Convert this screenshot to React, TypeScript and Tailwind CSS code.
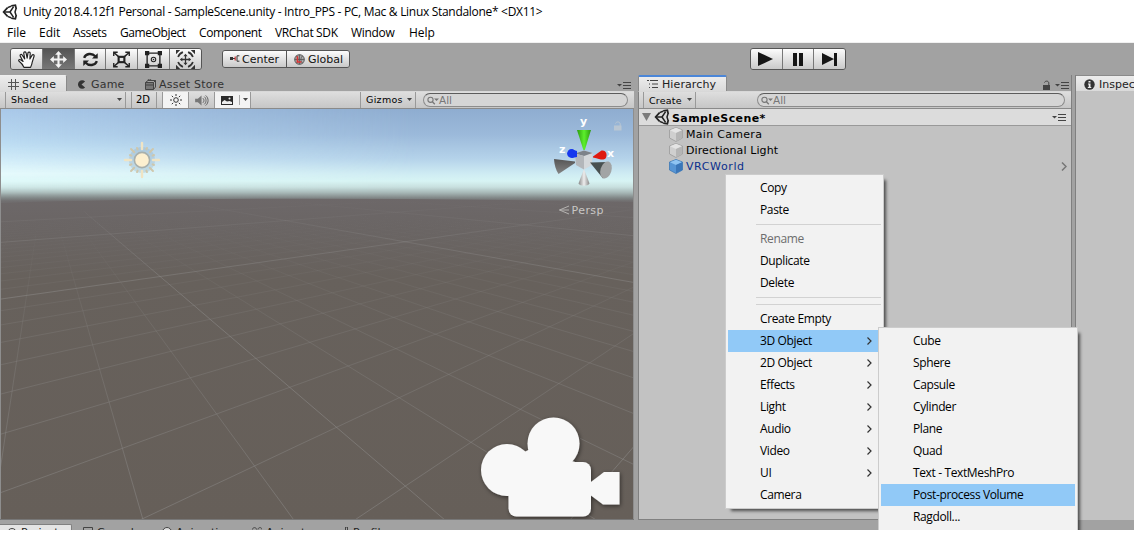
import React from 'react';

const UI_FONT = "font-['DejaVu_Sans',sans-serif]";
const WIN_FONT = "font-['Open_Sans','Noto_Sans',sans-serif]";

const UnityLogo = ({ size = 16 }) => (
    <svg width={size} height={size} viewBox="0 0 16 16" fill="none" stroke="#222" strokeWidth="1.5" className="shrink-0">
        <path d="M9.2 1.9 L13.4 1.2 L14.3 5 M14.3 11 L13.4 14.8 L9.2 14.1 M5.6 3.6 L1.6 8 L5.6 12.4" strokeWidth="1.7" />
        <path d="M9 2.2 L5.6 3.6 M9 13.8 L5.6 12.4 M14 4.8 L13 8 L14 11.2" />
        <path d="M2 8 H8 M8 8 L11.6 2.6 M8 8 L11.6 13.4" strokeWidth="1.5" />
    </svg>
);

const Caret = ({ className = '' }) => (
    <svg width="5" height="3" viewBox="0 0 5 3" className={`shrink-0 ${className}`}>
        <path d="M0 0 H5 L2.5 3 Z" fill="#444" />
    </svg>
);

const PaneMenu = () => (
    <svg width="14" height="7" viewBox="0 0 14 7" className="shrink-0">
        <path d="M0 2 H5 L2.5 4.6 Z" fill="#444" />
        <path d="M6 .5 H14 M6 3.5 H14 M6 6.5 H14" stroke="#444" />
    </svg>
);

const Lock = ({ color = '#444' }) => (
    <svg width="9" height="10" viewBox="0 0 9 10" className="shrink-0">
        <path d="M1 5 H8 V10 H1 Z" fill={color} />
        <path d="M2.5 2.5 C3 .8 6.6 .4 6.8 3 V5" fill="none" stroke={color} />
    </svg>
);

const Search = ({ className = '' }) => (
    <div className={`flex h-[14px] items-center rounded-full border border-[#8c8c8c] border-t-[#5c5c5c] bg-[#d5d5d5] pl-[3px] text-[10.5px] text-[#777] ${className}`}>
        <svg width="12" height="9" viewBox="0 0 12 9">
            <circle cx="3.5" cy="3.8" r="2.6" fill="none" stroke="#777" strokeWidth="1.1" />
            <path d="M5.4 5.7 L7.8 8.2" stroke="#777" strokeWidth="1.3" />
            <path d="M7 2.4 H12 L9.5 5 Z" fill="#777" />
        </svg>
        All
    </div>
);

/* ---------- toolbar ---------- */

const toolIcons = [
    // hand
    <path key="hand" fill="#fafafa" stroke="#222" strokeWidth="1.1" strokeLinejoin="round" strokeLinecap="round" d="M5.6 15.4 C4.6 13 2.4 10.6 .8 9.4 C.2 8.2 1.6 7.6 2.8 8.4 L4.8 9.8 L2 4.6 C1.7 3.2 3.2 2.8 3.9 3.8 L6.3 7.4 L5.4 2 C5.5 .6 7.2 .5 7.6 1.8 L8.6 6.8 L9.4 1.7 C9.9 .5 11.5 .9 11.5 2.2 L11.2 7.4 L13.3 3.9 C14.1 2.9 15.5 3.7 15.1 4.9 L13.4 10.4 C13.2 12.4 12.6 13.4 11.8 15.4 Z" />,
    // move
    <path key="move" fill="#f4f4f4" d="M8 0 L11.2 3.6 H9 V7 H12.4 V4.8 L16 8 L12.4 11.2 V9 H9 V12.4 H11.2 L8 16 L4.8 12.4 H7 V9 H3.6 V11.2 L0 8 L3.6 4.8 V7 H7 V3.6 H4.8 Z" />,
    // rotate
    <g key="rotate" fill="none" stroke="#222" strokeWidth="2.2">
        <path d="M2 6.4 C3.5 2.2 9.5 1.6 12.5 5 M14 9.6 C12.5 13.8 6.5 14.4 3.5 11" />
        <path d="M14.8 2 V7 H9.4 Z M1.2 14 V9 H6.6 Z" fill="#222" stroke="none" />
    </g>,
    // scale
    <g key="scale" fill="none" stroke="#222" strokeWidth="1.4">
        <rect x="5.3" y="5.5" width="5.4" height="5" strokeWidth="2" />
        <path d="M5 5 L1 1.6 M11 5 L15 1.6 M5 11 L1 14.4 M11 11 L15 14.4" />
        <path d="M.7 4.6 V1.2 H4.4 M11.6 1.2 H15.3 V4.6 M.7 11.4 V14.8 H4.4 M11.6 14.8 H15.3 V11.4" strokeWidth="1.3" />
    </g>,
    // rect
    <g key="rect" fill="none" stroke="#222">
        <path d="M2 2 H14 V14 H2 Z" strokeWidth="1.3" />
        <circle cx="8" cy="8" r="2.1" /><circle cx="8" cy="8" r=".7" fill="#222" stroke="none" />
        <path d="M0 0 H4 V4 H0 Z M12 0 H16 V4 H12 Z M0 12 H4 V16 H0 Z M12 12 H16 V16 H12 Z" fill="#222" stroke="none" />
    </g>,
    // transform
    <g key="transform" fill="none" stroke="#333">
        <path d="M8 2.6 L10 5 H8.6 V7.4 H11 V6 L13.4 8 L11 10 V8.6 H8.6 V11 H10 L8 13.4 L6 11 H7.4 V8.6 H5 V10 L2.6 8 L5 6 V7.4 H7.4 V5 H6 Z" fill="#333" stroke="none" />
        <path d="M1 5.6 A7.4 7.4 0 0 1 5.6 1 M10.4 1 A7.4 7.4 0 0 1 15 5.6 M15 10.4 A7.4 7.4 0 0 1 10.4 15 M5.6 15 A7.4 7.4 0 0 1 1 10.4" strokeWidth="1.6" />
        <path d="M-1 3 V-1 H3 Z M13 -1 H17 V3 Z M17 13 V17 H13 Z M3 17 H-1 V13 Z" fill="#333" stroke="none" />
    </g>,
];

const BTN = 'bg-linear-to-b from-[#fcfcfc] to-[#c9c9c9]';

const Toolbar = () => (
    <div className="flex h-8 shrink-0 items-start pl-[10px] text-[11px] text-[#111]">
        <div className="mt-[5px] flex h-[22px] w-[192px] overflow-hidden rounded-[3px] border border-[#555]">
            {toolIcons.map((icon, i) => (
                <div
                    key={i}
                    className={`flex flex-1 items-center justify-center ${i > 0 ? 'border-l border-[#777]' : ''} ${i === 1 ? 'bg-linear-to-b from-[#555] to-[#777]' : BTN}`}
                >
                    <svg width={i === 5 ? 19 : 17} height={i === 5 ? 19 : 17} viewBox={i === 5 ? '-1 -1 18 18' : '0 0 16 16'}>{icon}</svg>
                </div>
            ))}
        </div>
        <div className="mt-[7px] ml-5 flex h-[18px] w-[128px] overflow-hidden rounded-[3px] border border-[#555]">
            <div className={`flex w-[63px] shrink-0 items-center pl-[7px] ${BTN}`}>
                <svg width="10" height="8" viewBox="0 0 10 8" className="mr-[2px] shrink-0">
                    <path d="M0 2 H3 V5 H0 Z" fill="#333" />
                    <path d="M3 3.5 H5" stroke="#333" />
                    <path d="M4.6 1.5 H5.8 V5.5 H4.6 Z" fill="#c33" />
                    <path d="M9.4 .8 H7 V6.2 H9.4" fill="none" stroke="#333" />
                </svg>
                Center
            </div>
            <div className={`flex flex-1 items-center border-l border-[#555] pl-[7px] ${BTN}`}>
                <svg width="11" height="11" viewBox="0 0 11 11" className="mr-[3px] shrink-0">
                    <circle cx="5.5" cy="5.5" r="4.8" fill="#aaa" stroke="#555" />
                    <path d="M5.5 .7 V10.3 M.7 5.5 H10.3 M2.4 1.7 C4.6 4 4.6 7 2.4 9.3 M8.6 1.7 C6.4 4 6.4 7 8.6 9.3" fill="none" stroke="#555" strokeWidth=".8" />
                    <path d="M3.4 2.2 V8 H7.4" fill="none" stroke="#d33" strokeWidth="1.6" />
                </svg>
                Global
            </div>
        </div>
        <div className="mt-[5px] ml-[400px] flex h-[22px] w-[96px] overflow-hidden rounded-[3px] border border-[#555]">
            {['M0 0 L15 7 L0 14 Z', 'M3 1 H7 V14 H3 Z M9 1 H13 V14 H9 Z', 'M0 1 L12 7 L0 13 Z M12 1 H15 V14 H12 Z'].map((d, i) => (
                <div key={i} className={`flex flex-1 items-center justify-center ${i > 0 ? 'border-l border-[#777]' : ''} ${BTN}`}>
                    <svg width="16" height="14" viewBox="0 0 16 14"><path d={d} fill="#161616" /></svg>
                </div>
            ))}
        </div>
    </div>
);

/* ---------- scene view ---------- */

// Projects a point of the ground grid onto the scene viewport
const project = (u: number, v: number) => {
    const w = 1 + 0.1444 * u - 0.2065 * v;
    return { x: (125.5 * u - 9.2 * v + 122.4) / w, y: (25.43 * u - 36.7 * v + 448.3) / w, w };
};

const gridLine = (at: (t: number) => { x: number; y: number; w: number }) => {
    let d = '';
    for (let t = -70; t <= 70; t += 0.25) {
        const p = at(t);
        if (p.w > 0.2) d += `${d ? 'L' : 'M'}${p.x.toFixed(1)} ${p.y.toFixed(1)}`;
    }
    return d;
};

const GroundGrid = () => {
    const lines = [];
    for (let i = -28; i <= 42; i++) {
        lines.push({ d: gridLine(t => project(i, t)), major: (i + 8) % 10 === 0 });
        if (i <= 5) lines.push({ d: gridLine(t => project(t, i)), major: (i + 7) % 10 === 0 });
    }
    return (
        <g fill="none">
            {lines.map((l, i) => (
                <path key={i} d={l.d} stroke={l.major ? 'url(#major)' : 'url(#minor)'} strokeWidth="1" />
            ))}
        </g>
    );
};

const SceneViewport = () => (
    <svg width="634" height="410" viewBox="0 109 634 410" className="block shrink-0">
        <defs>
            <linearGradient id="sky" x1="0" y1="109" x2="0" y2="209" gradientUnits="userSpaceOnUse">
                <stop offset="0" stopColor="#8fadd0" />
                <stop offset=".25" stopColor="#9bb9da" />
                <stop offset=".5" stopColor="#b5d3ea" />
                <stop offset=".65" stopColor="#cfecf3" />
                <stop offset=".72" stopColor="#d7f4f4" />
                <stop offset=".78" stopColor="#c8e0df" />
                <stop offset=".84" stopColor="#a5b5b4" />
                <stop offset=".89" stopColor="#808686" />
                <stop offset=".92" stopColor="#716f70" />
                <stop offset="1" stopColor="#6c6869" />
            </linearGradient>
            <linearGradient id="ground" x1="0" y1="197" x2="0" y2="519" gradientUnits="userSpaceOnUse">
                <stop offset="0" stopColor="#6d6869" />
                <stop offset=".1" stopColor="#6a6564" />
                <stop offset=".25" stopColor="#67615c" />
                <stop offset="1" stopColor="#665f59" />
            </linearGradient>
            {/* brighter sky towards the left, fading out before the horizon */}
            <linearGradient id="glowX" x1="0" y1="0" x2="420" y2="0" gradientUnits="userSpaceOnUse">
                <stop offset="0" stopColor="#fff" stopOpacity="1" />
                <stop offset=".5" stopColor="#fff" stopOpacity=".45" />
                <stop offset="1" stopColor="#fff" stopOpacity="0" />
            </linearGradient>
            <mask id="glowMask">
                <rect x="0" y="109" width="634" height="100" fill="url(#glowX)" />
            </mask>
            <linearGradient id="glow" x1="0" y1="109" x2="0" y2="195" gradientUnits="userSpaceOnUse">
                <stop offset="0" stopColor="#bcdcfa" stopOpacity=".6" />
                <stop offset=".4" stopColor="#cdeeff" stopOpacity=".6" />
                <stop offset=".75" stopColor="#edffff" stopOpacity=".75" />
                <stop offset="1" stopColor="#dfffff" stopOpacity="0" />
            </linearGradient>
            <linearGradient id="minor" x1="0" y1="212" x2="0" y2="500" gradientUnits="userSpaceOnUse">
                <stop offset="0" stopColor="#999" stopOpacity="0" />
                <stop offset=".15" stopColor="#999" stopOpacity=".05" />
                <stop offset=".4" stopColor="#999" stopOpacity=".18" />
                <stop offset="1" stopColor="#999" stopOpacity=".38" />
            </linearGradient>
            <linearGradient id="major" x1="0" y1="200" x2="0" y2="400" gradientUnits="userSpaceOnUse">
                <stop offset="0" stopColor="#a0a0a0" stopOpacity="0" />
                <stop offset=".2" stopColor="#a0a0a0" stopOpacity=".2" />
                <stop offset=".5" stopColor="#a0a0a0" stopOpacity=".36" />
                <stop offset="1" stopColor="#a0a0a0" stopOpacity=".36" />
            </linearGradient>
            <linearGradient id="green"><stop offset="0" stopColor="#2c9b10" /><stop offset=".5" stopColor="#5cf02c" /><stop offset="1" stopColor="#2c9b10" /></linearGradient>
            <linearGradient id="grey"><stop offset="0" stopColor="#888" /><stop offset=".5" stopColor="#eee" /><stop offset="1" stopColor="#888" /></linearGradient>
            <linearGradient id="dark" x1="0" y1="0" x2="0" y2="1"><stop offset="0" stopColor="#555" /><stop offset="1" stopColor="#858585" /></linearGradient>
            <filter id="shade" x="-20%" y="-20%" width="140%" height="140%">
                <feDropShadow dx="1" dy="1.5" stdDeviation="2" floodColor="#000" floodOpacity=".5" />
            </filter>
        </defs>
        <rect x="0" y="109" width="634" height="100" fill="url(#sky)" />
        <rect x="0" y="109" width="634" height="95" fill="url(#glow)" mask="url(#glowMask)" />
        <path d="M0 203 Q250 195 634 202 V519 H0 Z" fill="url(#ground)" />
        <GroundGrid />
        <path d="M.5 109 V519 M633.5 109 V519" stroke="#8e8e8e" />

        {/* Directional light */}
        <g transform="translate(142 160)" strokeLinecap="round">
            <circle r="13" fill="#8fa9bb" opacity=".3" />
            {Array.from({ length: 16 }, (_, i) => (
                <path
                    key={i}
                    d={i % 4 === 0 ? 'M0 -11 V-17' : i % 2 === 0 ? 'M0 -11 V-15.5' : 'M0 -11.5 V-13'}
                    strokeWidth={i % 4 === 0 ? 2.4 : 2}
                    stroke={i % 4 === 0 ? '#f0e4c4' : '#cfc7ac'}
                    transform={`rotate(${i * 22.5})`}
                />
            ))}
            <circle r="7.6" fill="#fdf0d0" stroke="#a9b0ac" strokeWidth="1.6" />
        </g>

        {/* Orientation gizmo */}
        <path d="M554 159 L575 161.5 V163 L558.5 174 Q554.5 168 554 159 Z" fill="url(#dark)" />
        <path d="M584 169 L589.5 183.5 C588 186.5 580 186.5 578.5 183.5 Z" fill="url(#grey)" />
        <path d="M575 153.5 L584 150.5 L592.5 153 L592 165 L584 169.5 L576 165 Z" fill="#d4d7da" />
        <path d="M575 153.5 L584 150.5 L592.5 153 L584 156 Z" fill="#7d8289" />
        <path d="M575 153.5 L584 156 V169.5 L576 165 Z" fill="#b3b6ba" />
        <path d="M590 162.5 L608 162 L603 178.5 Z" fill="#495050" />
        <ellipse cx="606" cy="170" rx="5.5" ry="8.8" transform="rotate(17 606 170)" fill="#a2a4a5" />
        <path d="M577 130 H591 L584.8 150 H583.4 Z" fill="url(#green)" />
        <path d="M593 156.5 L601.5 150.5 C606 149.5 608 155 605.5 158.5 C603 160.5 601 159.5 593 157.5 Z" fill="#df1a10" />
        <circle cx="571.5" cy="153.5" r="4.4" fill="#1637ee" />
        <path d="M572 149.5 L577 151 V157 L572 158 Z" fill="#1637ee" />
        <g fill="#fff" className="font-['DejaVu_Sans',sans-serif] text-[11px] font-bold">
            <text x="580" y="125">y</text>
            <text x="559" y="152.5">z</text>
            <text x="607" y="156.5">x</text>
        </g>
        <g transform="translate(613 121)">
            <path d="M1 4.5 H8.5 V9.5 H1 Z" fill="#b9c6d3" />
            <path d="M2.5 2.5 C3 .5 7 .2 7.2 3 V5" fill="none" stroke="#b9c6d3" />
        </g>
        <path d="M569 206 L559.5 210 L569 214 M559.5 210 H569" fill="none" stroke="#b5b3b1" />
        <text x="571.5" y="214" fill="#c9c7c5" textLength="32" className="font-['DejaVu_Sans',sans-serif] text-[11px]">Persp</text>

        {/* Camera */}
        <g fill="#f8f8f8" filter="url(#shade)">
            <circle cx="507" cy="470" r="26" />
            <circle cx="553.5" cy="443.5" r="26" />
            <rect x="508.5" y="462" width="82.5" height="54.5" rx="8" />
            <path d="M507 462 L530 449 L575 462 L540 480 H507 Z" />
            <path d="M591 482 L604 472 H619.5 V504.5 H603 L591 495.5 Z" />
        </g>
    </svg>
);

const SceneToolbar = () => (
    <div className="flex h-[18px] shrink-0 items-stretch border-y border-t-[#d8d8d8] border-b-[#8a8a8a] bg-linear-to-b from-[#dedede] to-[#c6c6c6] text-[9.5px] text-black">
        <div className="ml-[5px] flex w-[121px] items-center justify-between border-x border-[#999] pr-[3px] pl-[5px] tracking-[0.25px]">
            Shaded <Caret className="mb-[2px]" />
        </div>
        <div className="ml-[5px] flex w-[26px] items-center justify-center border-x border-[#999] pr-[2px] text-[10px]">2D</div>
        <div className="ml-[5px] flex w-[27px] items-center justify-center border-x border-[#999] bg-[#f3f3f3]">
            <svg width="12" height="12" viewBox="0 0 12 12" fill="none" stroke="#333">
                <circle cx="6" cy="6" r="2.3" />
                <path d="M6 0 V2 M6 10 V12 M0 6 H2 M10 6 H12 M1.8 1.8 L3.2 3.2 M8.8 8.8 L10.2 10.2 M1.8 10.2 L3.2 8.8 M8.8 3.2 L10.2 1.8" />
            </svg>
        </div>
        <div className="flex w-[25px] items-center justify-center">
            <svg width="14" height="11" viewBox="0 0 15 12" fill="none" stroke="#555">
                <path d="M0 4 H3 L7 .5 V11.5 L3 8 H0 Z" fill="#777" stroke="none" />
                <path d="M8.5 3.5 C10 5 10 7 8.5 8.5 M10 1.8 C12.5 4 12.5 8 10 10.2 M11.5 .5 C15 3.5 15 8.5 11.5 11.5" />
            </svg>
        </div>
        <div className="flex w-[37px] items-center border-x border-[#999] bg-[#f3f3f3] pl-[6px]">
            <svg width="12" height="9" viewBox="0 0 12 9">
                <rect width="12" height="9" fill="#2b2b2b" />
                <path d="M1 8 V6 L3.5 4 L6 5.5 L8.5 5 L11 6 V8 Z" fill="#eee" />
                <circle cx="8.5" cy="2.5" r="1" fill="#eee" />
            </svg>
            <div className="ml-[6px] h-[10px] w-px bg-[#aaa]" />
            <Caret className="mb-[2px] ml-[3px]" />
        </div>
        <div className="ml-[109px] flex w-[56px] items-center justify-between border-x border-[#999] pr-[3px] pl-[5px] tracking-[0.3px]">
            Gizmos <Caret className="mb-[2px]" />
        </div>
        <Search className="mt-[1px] ml-[7px] w-[205px]" />
    </div>
);

const ScenePanel = () => (
    <div className="flex w-[634px] flex-col border-b border-[#777]">
        <div className="flex h-4 shrink-0 items-stretch text-[11px] text-[#333]">
            <div className="flex w-[67px] items-center rounded-tr-[2px] border-t border-r border-[#8a8a8a] border-t-[#eee] bg-linear-to-b from-[#ececec] to-[#dadada] pt-px pl-2 tracking-[0.1px] text-[#222]">
                <svg width="11" height="11" viewBox="0 0 11 11" className="mr-[3px]">
                    <path d="M3.5 0 V11 M7.5 0 V11 M0 3.5 H11 M0 7.5 H11" stroke="#555" />
                </svg>
                Scene
            </div>
            <div className="flex w-[67px] items-center pt-[2px] pl-[10px] tracking-[0.2px]">
                <svg width="9" height="9" viewBox="0 0 10 10" className="mr-[5px]">
                    <path d="M9 1.8 A4.6 4.6 0 1 0 9 8.2 L5 5 Z" fill="#333" />
                </svg>
                Game
            </div>
            <div className="flex flex-1 items-center pt-[2px] pl-[11px]">
                <svg width="11" height="11" viewBox="0 0 11 11" className="mr-[3px]" fill="none" stroke="#444">
                    <path d="M.5 3.5 H8.5 V10.5 H.5 Z" fill="#777" />
                    <path d="M.5 3.5 L3 1.5 H10.5 V8 L8.5 10.5 M8.5 3.5 L10.5 1.5 M3 1.5 C3 -.5 6 -.5 6 1.5 M.5 6 H8.5" />
                </svg>
                <span className="tracking-[0.25px]">Asset Store</span>
            </div>
            <div className="flex items-center pt-[5px] pr-[3px]"><PaneMenu /></div>
        </div>
        <SceneToolbar />
        <SceneViewport />
    </div>
);

/* ---------- hierarchy ---------- */

const Cube = ({ blue = false }) => (
    <svg width="14" height="15" viewBox="0 0 14 15" className="shrink-0">
        <path d="M7 .5 L13.5 3 V11 L7 14.5 L.5 11 V3 Z" fill={blue ? '#5795d4' : '#cfcfcf'} stroke={blue ? '#3e78b5' : '#9a9a9a'} strokeWidth=".8" />
        <path d="M7 .8 L13 3.2 L7 6 L1 3.2 Z" fill={blue ? '#8fc4f2' : '#e4e4e4'} />
        <path d="M7 6 L13.2 3.2 V11 L7 14.2 Z" fill={blue ? '#3b76b8' : '#b5b5b5'} />
    </svg>
);

const objects = [
    { name: 'Main Camera', prefab: false, css: 'tracking-[0.3px]' },
    { name: 'Directional Light', prefab: false, css: 'tracking-[0.1px]' },
    { name: 'VRCWorld', prefab: true, css: 'tracking-[0.6px] text-[#0b2f8c]' },
];

const HierarchyPanel = () => (
    <div className="ml-1 flex w-[434px] flex-col border-r border-[#808080]">
        <div className="flex h-4 shrink-0 items-stretch justify-between text-[11px]">
            <div className="flex w-[89px] items-center rounded-t-[2px] border-x border-t-2 border-x-[#8a8a8a] border-t-[#4b86d8] bg-linear-to-b from-[#ececec] to-[#dadada] pl-2 tracking-[0.1px] text-[#222]">
                <svg width="12" height="10" viewBox="0 0 12 10" className="mr-[3px]">
                    <path d="M0 1.5 H2 M3 1.5 H11 M2 5 H3 M5 5 H11 M2 8.5 H3 M5 8.5 H11" stroke="#444" />
                </svg>
                Hierarchy
            </div>
            <div className="flex items-center gap-[4px] pt-[4px] pr-[2px]"><Lock /><PaneMenu /></div>
        </div>
        <div className="flex h-[18px] shrink-0 items-stretch border-y border-l border-t-[#d8d8d8] border-b-[#8a8a8a] border-l-[#808080] bg-linear-to-b from-[#dedede] to-[#c6c6c6] text-[9.5px] text-black">
            <div className="ml-1 flex w-[53px] items-center justify-between border-x border-[#999] pt-px pr-[3px] pl-[5px] tracking-[0.2px]">
                Create <Caret className="mb-[2px]" />
            </div>
            <Search className="mt-[1px] ml-[61px] w-[308px]" />
        </div>
        <div className="flex h-[411px] shrink-0 flex-col border-b border-l border-[#808080] bg-[#c2c2c2] text-[11px]">
            <div className="flex h-[17px] shrink-0 items-center border-b border-[#999] bg-[#dcdcdc] pr-[5px] pl-[3px]">
                <svg width="9" height="8" viewBox="0 0 9 8" className="mr-[3px]"><path d="M0 0 H9 L4.5 8 Z" fill="#7b7b7b" /></svg>
                <UnityLogo />
                <span className="ml-[2px] flex-1 pt-[2px] font-bold tracking-[0.4px]">SampleScene*</span>
                <PaneMenu />
            </div>
            {objects.map(o => (
                <div key={o.name} className="flex h-4 shrink-0 items-center pr-[4px] pl-[30px]">
                    <Cube blue={o.prefab} />
                    <span className={`ml-[3px] flex-1 ${o.css}`}>{o.name}</span>
                    {o.prefab && (
                        <svg width="6" height="9" viewBox="0 0 6 9"><path d="M1 .5 L5 4.5 L1 8.5" fill="none" stroke="#777" strokeWidth="1.5" /></svg>
                    )}
                </div>
            ))}
        </div>
    </div>
);

const InspectorPanel = () => (
    <div className="ml-[3px] flex w-[59px] flex-col border-l border-[#808080] bg-[#c2c2c2]">
        <div className="flex h-4 shrink-0 items-center border-t border-[#8a8a8a] bg-linear-to-b from-[#ececec] to-[#dadada] pt-px pl-[8px] text-[11px] text-[#222]">
            <svg width="11" height="11" viewBox="0 0 11 11" className="mr-[4px] shrink-0">
                <circle cx="5.5" cy="5.5" r="5.2" fill="#333" />
                <path d="M4.5 2 H6.5 V3.5 H4.5 Z M4 4.5 H6.5 V8 H7.3 V9 H3.8 V8 H4.7 V5.5 H4 Z" fill="#eee" />
            </svg>
            Inspector
        </div>
    </div>
);

/* ---------- bottom dock, cut off by the window edge ---------- */

const dockTabs = [
    { name: 'Project', css: 'w-[72px] pl-[7px] bg-[#e4e4e4] border-t border-r border-[#808080] rounded-tr-[2px]' },
    { name: 'Console', css: 'w-[79px] pl-[11px]' },
    { name: 'Animation', css: 'w-[90px] pl-[11px]' },
    { name: 'Animator', css: 'w-[85px] pl-[11px]' },
    { name: 'Profiler', css: 'pl-[13px]' },
];

const dockIcons = [
    <circle key="p" cx="5" cy="5" r="4.5" />,
    <path key="c" d="M.5 .5 H9.5 V9.5 H.5 Z M3 3.5 H7" />,
    <circle key="a" cx="5" cy="5" r="4.5" fill="#ddd" />,
    <path key="m" d="M.5 2.5 C.5 0 4.5 0 4.5 2.5 M6 2.5 C6 0 10 0 10 2.5" />,
    <path key="f" d="M6.5 0 H8.5 V10 H6.5 Z" />,
];

const DockTabs = () => (
    <div className="mt-1 flex h-4 shrink-0 items-stretch text-[11px] text-[#222]">
        {dockTabs.map((t, i) => (
            <div key={t.name} className={`flex shrink-0 items-center ${t.css}`}>
                <svg width="10" height="10" viewBox="0 0 10 10" className="mr-[4px] shrink-0" fill="none" stroke="#444">{dockIcons[i]}</svg>
                {t.name}
            </div>
        ))}
    </div>
);

/* ---------- context menus ---------- */

const contextItems = [
    'Copy', 'Paste', '-', 'Rename', 'Duplicate', 'Delete', '-', '-', 'Create Empty', '3D Object',
    '2D Object', 'Effects', 'Light', 'Audio', 'Video', 'UI', 'Camera',
];
const withSubmenu = ['3D Object', '2D Object', 'Effects', 'Light', 'Audio', 'Video', 'UI'];
const objectItems = ['Cube', 'Sphere', 'Capsule', 'Cylinder', 'Plane', 'Quad', 'Text - TextMeshPro', 'Post-process Volume', 'Ragdoll...'];

const ContextMenu = ({ items, active, className }: { items: string[]; active: string; className: string }) => (
    <div className={`absolute border border-[#ccc] bg-[#f2f2f2] p-[2px] text-[12px] tracking-[-0.37px] text-black shadow-[4px_4px_3px_-2px_rgba(0,0,0,0.6)] ${WIN_FONT} ${className}`}>
        {items.map((item, i) =>
            item === '-' ? (
                <div key={i} className="flex h-[7px] items-center pl-7"><div className="h-px flex-1 bg-[#d2d2d2]" /></div>
            ) : (
                <div
                    key={i}
                    className={`flex h-[22px] items-center justify-between pr-[6px] pl-8 ${item === active ? 'bg-[#91c9f7]' : ''} ${item === 'Rename' ? 'text-[#6d6d6d]' : ''}`}
                >
                    {item}
                    {withSubmenu.includes(item) && (
                        <svg width="5" height="8" viewBox="0 0 5 8" className="mr-[3px]"><path d="M.5 .5 L4 4 L.5 7.5" fill="none" stroke="#333" strokeWidth="1.2" /></svg>
                    )}
                </div>
            )
        )}
    </div>
);

const menus = [
    { name: 'File', css: 'w-8' },
    { name: 'Edit', css: 'w-[34px]' },
    { name: 'Assets', css: 'w-[47px] tracking-[-0.35px]' },
    { name: 'GameObject', css: 'w-[79px] tracking-[-0.4px]' },
    { name: 'Component', css: 'w-[76px] tracking-[-0.4px]' },
    { name: 'VRChat SDK', css: 'w-[76px] tracking-[-0.35px]' },
    { name: 'Window', css: 'w-[58px] tracking-[-0.3px]' },
    { name: 'Help', css: '' },
];

export default function App() {
    return (
        <div className={`flex h-[550px] w-[1134px] flex-col overflow-hidden bg-white leading-none whitespace-nowrap ${UI_FONT}`}>
            <div className={`flex h-6 shrink-0 items-center pl-[2px] text-[12px] text-black ${WIN_FONT}`}>
                <UnityLogo />
                <span className="ml-[5px] tracking-[-0.3px]">Unity 2018.4.12f1 Personal - SampleScene.unity - Intro_PPS - PC, Mac &amp; Linux Standalone* &lt;DX11&gt;</span>
            </div>
            <div className={`flex h-[19px] shrink-0 items-center border-b border-[#f0f0f0] pl-[7px] text-[12px] text-black ${WIN_FONT}`}>
                {menus.map(m => <div key={m.name} className={m.css}>{m.name}</div>)}
            </div>

            <div className="relative flex h-[487px] shrink-0 flex-col overflow-hidden bg-[#a2a2a2]">
                <Toolbar />
                <div className="flex h-[445px] shrink-0">
                    <ScenePanel />
                    <HierarchyPanel />
                    <InspectorPanel />
                </div>
                <DockTabs />

                {/* Right click menu with the 3D Object submenu open */}
                <ContextMenu items={contextItems} active="3D Object" className="top-[131px] left-[725px] w-[159px]" />
                <ContextMenu items={objectItems} active="Post-process Volume" className="top-[284px] left-[878px] h-[240px] w-[200px]" />
            </div>
        </div>
    );
}
